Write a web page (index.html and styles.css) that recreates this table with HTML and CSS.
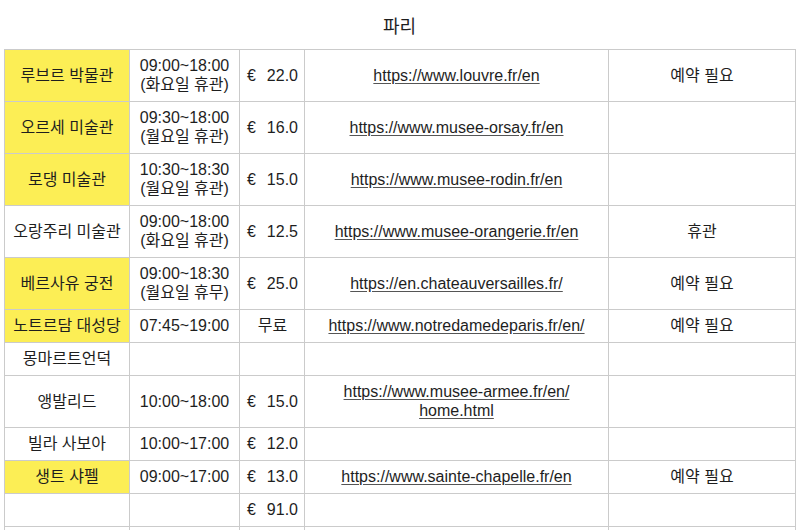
FILE: index.html
```html
<!DOCTYPE html>
<html lang="ko">
<head>
<meta charset="utf-8">
<link rel="stylesheet" href="styles.css">
</head>
<body>
<div class="page">
  <h1 class="title">파리</h1>
  <table class="sheet">
    <colgroup>
      <col class="c-name"><col class="c-time"><col class="c-price"><col class="c-url"><col class="c-note">
    </colgroup>
    <tbody>
      <tr>
        <td class="name hl">루브르 박물관</td>
        <td class="time">09:00~18:00<br>(화요일 휴관)</td>
        <td class="price"><div class="pr"><span>€</span><span>22.0</span></div></td>
        <td class="url"><a href="#">https://www.louvre.fr/en</a></td>
        <td class="note">예약 필요</td>
      </tr>
      <tr>
        <td class="name hl">오르세 미술관</td>
        <td class="time">09:30~18:00<br>(월요일 휴관)</td>
        <td class="price"><div class="pr"><span>€</span><span>16.0</span></div></td>
        <td class="url"><a href="#">https://www.musee-orsay.fr/en</a></td>
        <td class="note"></td>
      </tr>
      <tr>
        <td class="name hl">로댕 미술관</td>
        <td class="time">10:30~18:30<br>(월요일 휴관)</td>
        <td class="price"><div class="pr"><span>€</span><span>15.0</span></div></td>
        <td class="url"><a href="#">https://www.musee-rodin.fr/en</a></td>
        <td class="note"></td>
      </tr>
      <tr>
        <td class="name">오랑주리 미술관</td>
        <td class="time">09:00~18:00<br>(화요일 휴관)</td>
        <td class="price"><div class="pr"><span>€</span><span>12.5</span></div></td>
        <td class="url"><a href="#">https://www.musee-orangerie.fr/en</a></td>
        <td class="note">휴관</td>
      </tr>
      <tr>
        <td class="name hl">베르사유 궁전</td>
        <td class="time">09:00~18:30<br>(월요일 휴무)</td>
        <td class="price"><div class="pr"><span>€</span><span>25.0</span></div></td>
        <td class="url"><a href="#">https://en.chateauversailles.fr/</a></td>
        <td class="note">예약 필요</td>
      </tr>
      <tr>
        <td class="name hl">노트르담 대성당</td>
        <td class="time">07:45~19:00</td>
        <td class="price center">무료</td>
        <td class="url"><a href="#">https://www.notredamedeparis.fr/en/</a></td>
        <td class="note">예약 필요</td>
      </tr>
      <tr>
        <td class="name">몽마르트언덕</td>
        <td class="time"></td>
        <td class="price"></td>
        <td class="url"></td>
        <td class="note"></td>
      </tr>
      <tr>
        <td class="name">앵발리드</td>
        <td class="time">10:00~18:00</td>
        <td class="price"><div class="pr"><span>€</span><span>15.0</span></div></td>
        <td class="url"><a href="#">https://www.musee-armee.fr/en/<br>home.html</a></td>
        <td class="note"></td>
      </tr>
      <tr>
        <td class="name">빌라 사보아</td>
        <td class="time">10:00~17:00</td>
        <td class="price"><div class="pr"><span>€</span><span>12.0</span></div></td>
        <td class="url"></td>
        <td class="note"></td>
      </tr>
      <tr>
        <td class="name hl">생트 샤펠</td>
        <td class="time">09:00~17:00</td>
        <td class="price"><div class="pr"><span>€</span><span>13.0</span></div></td>
        <td class="url"><a href="#">https://www.sainte-chapelle.fr/en</a></td>
        <td class="note">예약 필요</td>
      </tr>
      <tr>
        <td class="name"></td>
        <td class="time"></td>
        <td class="price"><div class="pr"><span>€</span><span>91.0</span></div></td>
        <td class="url"></td>
        <td class="note"></td>
      </tr>
      <tr>
        <td class="name">&nbsp;</td>
        <td class="time"></td>
        <td class="price"></td>
        <td class="url"></td>
        <td class="note"></td>
      </tr>
    </tbody>
  </table>
</div>
</body>
</html>
```

FILE: styles.css
```css
html, body {
  margin: 0;
  padding: 0;
  background: #ffffff;
}

body {
  font-family: "Liberation Sans", "Noto Sans CJK KR", sans-serif;
  color: #1e1e1e;
  font-size: 16px;
}

.page {
  padding: 16px 5px 0 4px;
}

.title {
  margin: 0 0 11px 0;
  font-size: 18px;
  line-height: 22px;
  font-weight: normal;
  text-align: center;
  color: #1e1e1e;
}

.sheet {
  width: 791px;
  table-layout: fixed;
  border-collapse: collapse;
}

.c-name { width: 125px; }
.c-time { width: 110px; }
.c-price { width: 65px; }
.c-url { width: 304px; }
.c-note { width: 187px; }

.sheet td {
  border: 1px solid #cbcbcb;
  padding: 6px 6px 7px 6px;
  line-height: 19px;
  vertical-align: middle;
  text-align: center;
  white-space: nowrap;
}

.sheet td.hl {
  background: #fcee55;
}

.sheet td.price {
  padding-left: 7px;
  padding-right: 6px;
}

.pr {
  display: flex;
  justify-content: space-between;
}

.sheet td.center {
  text-align: center;
}

.url a {
  color: #1e1e1e;
  text-decoration: underline;
  text-underline-offset: 2px;
  text-decoration-color: #555;
}
```
